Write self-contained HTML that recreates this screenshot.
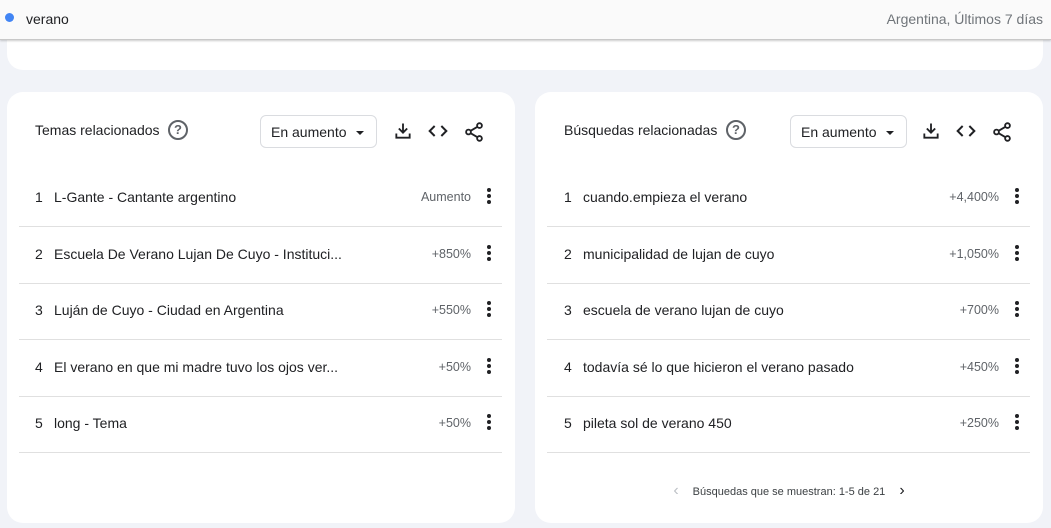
<!DOCTYPE html>
<html><head><meta charset="utf-8"><style>
*{margin:0;padding:0;box-sizing:border-box}
body{width:1051px;height:528px;background:#f1f3f8;font-family:"Liberation Sans",sans-serif;color:#202124;position:relative;overflow:hidden}
.top{position:absolute;left:0;top:0;width:1051px;height:40px;background:#fafafa;border-bottom:1px solid #c8c8c8;box-shadow:0 1px 2px rgba(0,0,0,.2);z-index:2}
.top .dot{position:absolute;left:5px;top:13px;width:9px;height:9px;border-radius:50%;background:#4285f4}
.top .q{position:absolute;left:26px;top:11px;font-size:14px}
.top .r{position:absolute;right:8px;top:11px;font-size:14px;color:#70757a}
.prev{position:absolute;left:7px;top:20px;width:1036px;height:50px;background:#fff;border-radius:0 0 16px 16px}
.card{position:absolute;top:92px;width:508px;height:431px;background:#fff;border-radius:16px}
.title{position:absolute;left:28px;top:30px;font-size:14px}
.help{position:absolute;top:28px;width:20px;height:20px;border:2px solid #5f6368;border-radius:50%;font-size:13px;font-weight:bold;color:#5f6368;text-align:center;line-height:16px}
.sel{position:absolute;left:253px;top:23px;width:117px;height:33px;border:1px solid #dadce0;border-radius:6px;font-size:14px;padding:8px 0 0 10px}
.sel:after{content:"";position:absolute;right:12px;top:15px;border-left:4px solid transparent;border-right:4px solid transparent;border-top:4px solid #202124}
.ic{position:absolute;top:29px}
.row{position:absolute;left:12px;width:483px;height:57px;border-bottom:1px solid #e0e0e0;font-size:14px}
.row .n{position:absolute;left:16px;top:19px}
.row .t{position:absolute;left:35px;top:19px}
.row .v{position:absolute;right:31px;top:20px;font-size:12.5px;color:#5f6368}
.row .m{position:absolute;right:10px;top:17px}
.pg{position:absolute;left:0;width:508px;top:390px;text-align:center;font-size:11px;color:#3c4043}
</style></head><body>
<div class="prev"></div>
<div class="top"><div class="dot"></div><div class="q">verano</div><div class="r">Argentina, Últimos 7 días</div></div>

<div class="card" style="left:7px">
<div class="title">Temas relacionados</div><div class="help" style="left:161px">?</div>
<div class="sel">En aumento</div>
<svg class="ic" style="left:386px" width="20" height="20" viewBox="0 0 24 24"><path d="M12 3v11M7 9l5 5 5-5M4 15v5h16v-5" fill="none" stroke="#202124" stroke-width="2.2"/></svg>
<svg class="ic" style="left:421px" width="20" height="20" viewBox="0 0 24 24"><path d="M8 6l-6 6 6 6M16 6l6 6-6 6" fill="none" stroke="#202124" stroke-width="2.4"/></svg>
<svg class="ic" style="left:456px" width="22" height="22" viewBox="0 0 24 24"><circle cx="18" cy="5" r="2.6" fill="none" stroke="#202124" stroke-width="2"/><circle cx="6" cy="12" r="2.6" fill="none" stroke="#202124" stroke-width="2"/><circle cx="18" cy="19" r="2.6" fill="none" stroke="#202124" stroke-width="2"/><path d="M8.3 10.7l7.4-4.4M8.3 13.3l7.4 4.4" stroke="#202124" stroke-width="2"/></svg>
<div class="row" style="top:78px"><span class="n">1</span><span class="t">L-Gante - Cantante argentino</span><span class="v">Aumento</span><svg class="m" width="6" height="18"><circle cx="3" cy="3" r="2" fill="#202124"/><circle cx="3" cy="9" r="2" fill="#202124"/><circle cx="3" cy="15" r="2" fill="#202124"/></svg></div>
<div class="row" style="top:135px"><span class="n">2</span><span class="t">Escuela De Verano Lujan De Cuyo - Instituci...</span><span class="v">+850%</span><svg class="m" width="6" height="18"><circle cx="3" cy="3" r="2" fill="#202124"/><circle cx="3" cy="9" r="2" fill="#202124"/><circle cx="3" cy="15" r="2" fill="#202124"/></svg></div>
<div class="row" style="top:191px"><span class="n">3</span><span class="t">Luján de Cuyo - Ciudad en Argentina</span><span class="v">+550%</span><svg class="m" width="6" height="18"><circle cx="3" cy="3" r="2" fill="#202124"/><circle cx="3" cy="9" r="2" fill="#202124"/><circle cx="3" cy="15" r="2" fill="#202124"/></svg></div>
<div class="row" style="top:248px"><span class="n">4</span><span class="t">El verano en que mi madre tuvo los ojos ver...</span><span class="v">+50%</span><svg class="m" width="6" height="18"><circle cx="3" cy="3" r="2" fill="#202124"/><circle cx="3" cy="9" r="2" fill="#202124"/><circle cx="3" cy="15" r="2" fill="#202124"/></svg></div>
<div class="row" style="top:304px"><span class="n">5</span><span class="t">long - Tema</span><span class="v">+50%</span><svg class="m" width="6" height="18"><circle cx="3" cy="3" r="2" fill="#202124"/><circle cx="3" cy="9" r="2" fill="#202124"/><circle cx="3" cy="15" r="2" fill="#202124"/></svg></div>
</div>

<div class="card" style="left:535px">
<div class="title" style="left:29px">Búsquedas relacionadas</div><div class="help" style="left:191px">?</div>
<div class="sel" style="left:255px">En aumento</div>
<svg class="ic" style="left:386px" width="20" height="20" viewBox="0 0 24 24"><path d="M12 3v11M7 9l5 5 5-5M4 15v5h16v-5" fill="none" stroke="#202124" stroke-width="2.2"/></svg>
<svg class="ic" style="left:421px" width="20" height="20" viewBox="0 0 24 24"><path d="M8 6l-6 6 6 6M16 6l6 6-6 6" fill="none" stroke="#202124" stroke-width="2.4"/></svg>
<svg class="ic" style="left:456px" width="22" height="22" viewBox="0 0 24 24"><circle cx="18" cy="5" r="2.6" fill="none" stroke="#202124" stroke-width="2"/><circle cx="6" cy="12" r="2.6" fill="none" stroke="#202124" stroke-width="2"/><circle cx="18" cy="19" r="2.6" fill="none" stroke="#202124" stroke-width="2"/><path d="M8.3 10.7l7.4-4.4M8.3 13.3l7.4 4.4" stroke="#202124" stroke-width="2"/></svg>
<div class="row" style="top:78px"><span class="n" style="left:17px">1</span><span class="t" style="left:36px">cuando.empieza el verano</span><span class="v">+4,400%</span><svg class="m" width="6" height="18"><circle cx="3" cy="3" r="2" fill="#202124"/><circle cx="3" cy="9" r="2" fill="#202124"/><circle cx="3" cy="15" r="2" fill="#202124"/></svg></div>
<div class="row" style="top:135px"><span class="n" style="left:17px">2</span><span class="t" style="left:36px">municipalidad de lujan de cuyo</span><span class="v">+1,050%</span><svg class="m" width="6" height="18"><circle cx="3" cy="3" r="2" fill="#202124"/><circle cx="3" cy="9" r="2" fill="#202124"/><circle cx="3" cy="15" r="2" fill="#202124"/></svg></div>
<div class="row" style="top:191px"><span class="n" style="left:17px">3</span><span class="t" style="left:36px">escuela de verano lujan de cuyo</span><span class="v">+700%</span><svg class="m" width="6" height="18"><circle cx="3" cy="3" r="2" fill="#202124"/><circle cx="3" cy="9" r="2" fill="#202124"/><circle cx="3" cy="15" r="2" fill="#202124"/></svg></div>
<div class="row" style="top:248px"><span class="n" style="left:17px">4</span><span class="t" style="left:36px">todavía sé lo que hicieron el verano pasado</span><span class="v">+450%</span><svg class="m" width="6" height="18"><circle cx="3" cy="3" r="2" fill="#202124"/><circle cx="3" cy="9" r="2" fill="#202124"/><circle cx="3" cy="15" r="2" fill="#202124"/></svg></div>
<div class="row" style="top:304px"><span class="n" style="left:17px">5</span><span class="t" style="left:36px">pileta sol de verano 450</span><span class="v">+250%</span><svg class="m" width="6" height="18"><circle cx="3" cy="3" r="2" fill="#202124"/><circle cx="3" cy="9" r="2" fill="#202124"/><circle cx="3" cy="15" r="2" fill="#202124"/></svg></div>
<div class="pg"><span style="color:#bdc1c6;margin-right:14px;font-size:16px">&lsaquo;</span>Búsquedas que se muestran: 1-5 de 21<span style="font-size:16px;margin-left:14px;color:#202124">&rsaquo;</span></div>
</div>
</body></html>
